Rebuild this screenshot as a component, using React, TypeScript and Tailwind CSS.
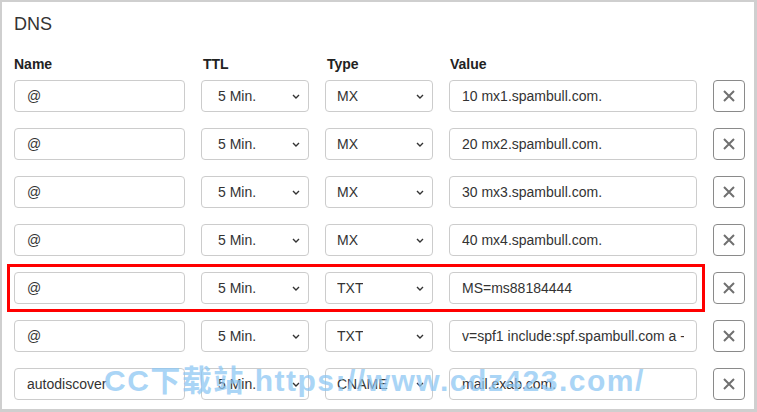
type Row = { name: string; ttl: string; type: string; value: string };

const rows: Row[] = [
  { name: "@", ttl: "5 Min.", type: "MX", value: "10 mx1.spambull.com." },
  { name: "@", ttl: "5 Min.", type: "MX", value: "20 mx2.spambull.com." },
  { name: "@", ttl: "5 Min.", type: "MX", value: "30 mx3.spambull.com." },
  { name: "@", ttl: "5 Min.", type: "MX", value: "40 mx4.spambull.com." },
  { name: "@", ttl: "5 Min.", type: "TXT", value: "MS=ms88184444" },
  { name: "@", ttl: "5 Min.", type: "TXT", value: "v=spf1 include:spf.spambull.com a -all" },
  { name: "autodiscover", ttl: "5 Min.", type: "CNAME", value: "mail.exab.com." },
];

function Chevron() {
  return (
    <svg width="8" height="5" viewBox="0 0 8 5" className="shrink-0">
      <path d="M1 1l3 3 3-3" fill="none" stroke="#333" strokeWidth="1.4" />
    </svg>
  );
}

function FakeSelect({ text, pad }: { text: string; pad: string }) {
  return (
    <div className={`h-8 flex items-center justify-between rounded border border-[#ccc] bg-white pr-[8px] ${pad}`}>
      <span className="text-[14px] text-[#333] whitespace-nowrap overflow-hidden">{text}</span>
      <Chevron />
    </div>
  );
}

export default function App() {
  return (
    <div className="relative w-[757px] h-[412px] overflow-hidden bg-[#cfcfcf] pt-[2px] pl-[2px] pr-[3px] pb-[3px] font-['Liberation_Sans',Arial,sans-serif]">
      <div className="h-full bg-white pl-3 pt-3">
        {/* title */}
        <div className="h-5 text-[18px] leading-5 text-[#333]">DNS</div>

        {/* column headers */}
        <div className="mt-[22px] grid grid-cols-[171px_108px_108px_248px_32px] gap-x-4 h-4 text-[14px] leading-4 font-bold text-[#222]">
          <div>Name</div>
          <div className="pl-[2px]">TTL</div>
          <div className="pl-[2px]">Type</div>
          <div className="pl-[1px]">Value</div>
          <div />
        </div>

        {/* records */}
        <div className="mt-2 flex flex-col gap-4">
          {rows.map((r, i) => (
            <div key={i} className="grid grid-cols-[171px_108px_108px_248px_32px] gap-x-4 h-8">
              <input
                readOnly
                value={r.name}
                className="h-8 w-full rounded border border-[#ccc] px-3 text-[14px] text-[#333] outline-none"
              />
              <FakeSelect text={r.ttl} pad="pl-4" />
              <FakeSelect text={r.type} pad="pl-[11px]" />
              <input
                readOnly
                value={r.value}
                className="h-8 w-full rounded border border-[#ccc] px-3 text-[14px] text-[#333] outline-none"
              />
              <button className="h-8 w-8 flex items-center justify-center rounded border border-[#8a8a8a] bg-white">
                <svg width="12" height="12" viewBox="0 0 12 12">
                  <path d="M1 1L11 11M11 1L1 11" stroke="#707070" strokeWidth="2" />
                </svg>
              </button>
            </div>
          ))}
        </div>
      </div>

      {/* red highlight around the TXT record */}
      <div className="absolute left-[7px] top-[264px] w-[698px] h-[48px] border-[3px] border-[#ff0000]" />

      {/* watermark */}
      <div className="absolute left-[104px] top-[366px] text-[30px] leading-[30px] font-bold tracking-[1.5px] whitespace-nowrap text-[#8ec7f3] opacity-75 pointer-events-none font-['Liberation_Sans','Noto_Sans_CJK_SC',sans-serif]">
        CC下载站 https://www.cdz423.com/
      </div>
    </div>
  );
}
